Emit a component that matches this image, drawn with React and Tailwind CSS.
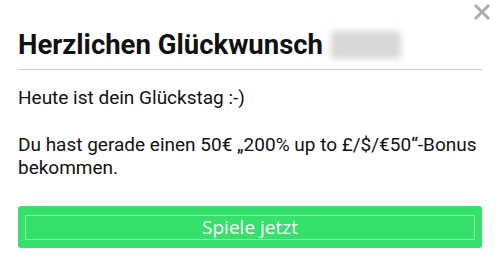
import React from 'react';

function CloseIcon() {
  return (
    <svg width="18" height="18" viewBox="0 0 18 18" className="block">
      <path d="M2 2 L16 16 M16 2 L2 16" stroke="#acacac" strokeWidth="3" />
    </svg>
  );
}

export default function App() {
  return (
    <div className="relative w-[500px] h-[262px] bg-white overflow-hidden" style={{ fontFamily: 'Roboto, "Liberation Sans", sans-serif' }}>
      {/* close */}
      <button className="absolute top-[3px] right-[9px] p-0">
        <CloseIcon />
      </button>

      <div className="px-[18px] pt-[29px]">
        {/* header */}
        <div className="flex items-center h-[32px]">
          <h1 className="text-[27.5px] font-bold text-[#111] leading-none">
            Herzlichen Glückwunsch
          </h1>
          <div className="ml-[8px] w-[70px] h-[28px] bg-[#d8d8d8] blur-[3px] rounded-sm"></div>
        </div>
        <div className="mt-[8px] h-px bg-[#c8c8c8]"></div>

        {/* body */}
        <div className="mt-[16px] text-[19px] leading-[23px] text-[#111]">
          <p>Heute ist dein Glückstag :-)</p>
          <p className="mt-[24px]">Du hast gerade einen 50€ „200% up to £/$/€50“-Bonus bekommen.</p>
        </div>

        {/* cta */}
        <button className="mt-[27px] w-full h-[42px] rounded-[3px] bg-[#35e06b] px-[7px] pb-[8px] pt-[9px]">
          <div className="h-full border border-[#86eea6] flex items-center justify-center text-white text-[19px]" style={{ fontFamily: '"Open Sans", "DejaVu Sans", sans-serif' }}>
            Spiele jetzt
          </div>
        </button>
      </div>
    </div>
  );
}
